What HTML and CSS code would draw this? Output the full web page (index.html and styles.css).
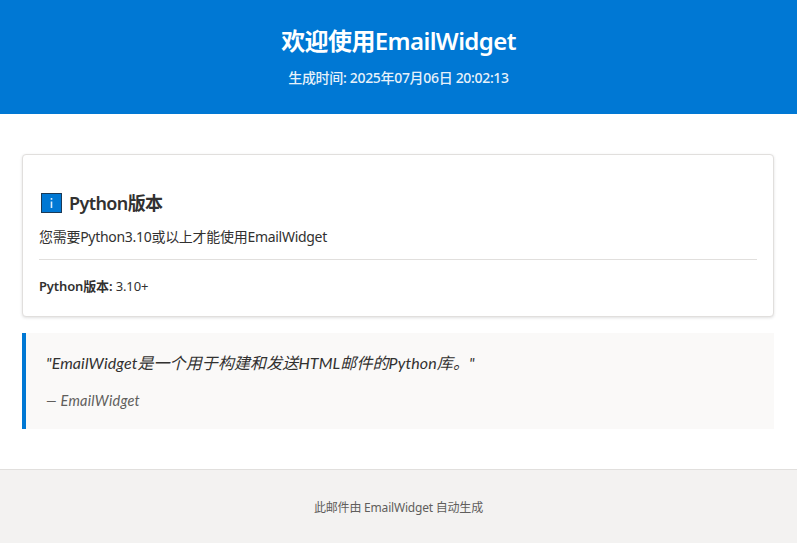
FILE: index.html
```html
<!DOCTYPE html>
<html lang="zh-CN">
<head>
<meta charset="utf-8">
<title>EmailWidget</title>
<link rel="stylesheet" href="styles.css">
</head>
<body>
<header class="header">
  <h1 class="title">欢迎使用EmailWidget</h1>
  <p class="timestamp">生成时间: 2025年07月06日 20:02:13</p>
</header>
<main class="content">
  <section class="card">
    <h3 class="card-title"><svg class="info-icon" viewBox="0 0 21 20" aria-hidden="true"><rect x="0.5" y="0.5" width="20" height="19" fill="#0078d4" stroke="#1b3a57"/><rect x="9.7" y="8.5" width="1.6" height="6.5" fill="#d9ecfb"/><rect x="9.7" y="5" width="1.6" height="1.8" fill="#d9ecfb"/></svg><span>Python版本</span></h3>
    <p class="card-desc">您需要Python3.10或以上才能使用EmailWidget</p>
    <div class="meta"><strong>Python版本:</strong> 3.10+</div>
  </section>
  <blockquote class="quote">
    <p class="quote-text">"EmailWidget是一个用于构建和发送HTML邮件的Python库。"</p>
    <cite class="quote-author">— EmailWidget</cite>
  </blockquote>
</main>
<footer class="footer">此邮件由 EmailWidget 自动生成</footer>
</body>
</html>
```
FILE: styles.css
```css
* { box-sizing: border-box; }
html, body { margin: 0; padding: 0; }
body {
  background: #fff;
  color: #323130;
  font-family: "Noto Sans", "Noto Sans CJK SC", sans-serif;
  font-size: 14px;
  height: 543px;
  overflow: hidden;
}
.header {
  background: #0078d4;
  color: #fff;
  height: 114px;
  padding-top: 24px;
  text-align: center;
}
.title { margin: 0; font-size: 24px; line-height: 34px; font-weight: 600; letter-spacing: -0.6px; }
.timestamp { margin: 10px 0 0; font-size: 14px; line-height: 20px; font-weight: 500; opacity: .9; letter-spacing: -0.32px; }
.content { padding: 40px 23px 40px 22px; }
.card {
  background: #fff;
  border: 1px solid #e1dfdd;
  border-radius: 4px;
  box-shadow: 0 1px 3px rgba(0,0,0,.12);
  height: 163px;
  padding: 35px 16px 0;
}
.card-title {
  display: flex;
  align-items: center;
  gap: 7px;
  margin: 0;
  font-size: 18px;
  line-height: 26px;
  font-weight: 600;
  letter-spacing: -0.6px;
  padding-left: 2px;
}
.info-icon { width: 21px; height: 20px; flex: none; }
.card-desc { margin: 11px 0 0; font-size: 14px; line-height: 20px; letter-spacing: -0.29px; color: #323130; }
.meta {
  border-top: 1px solid #e1dfdd;
  margin-top: 12px;
  padding-top: 16px;
  font-size: 13px;
  line-height: 20px;
  letter-spacing: -0.13px;
}
.meta strong { font-weight: 600; }
.quote {
  margin: 16px 0 0;
  background: #faf9f8;
  border-left: 4px solid #0078d4;
  height: 96px;
  padding: 18px 20px 0;
}
.quote-text { margin: 0; font-family: "Lato", "Noto Sans CJK SC", sans-serif; font-size: 16px; line-height: 24px; letter-spacing: 0.1px; font-style: italic; }
.quote-author { display: block; margin-top: 16px; font-family: "Lato", "Noto Sans CJK SC", sans-serif; font-size: 14.5px; line-height: 20px; letter-spacing: 0.25px; font-style: italic; color: #605e5c; }
.footer {
  background: #f3f2f1;
  border-top: 1px solid #e1dfdd;
  height: 74px;
  padding-top: 28px;
  text-align: center;
  font-size: 12px;
  line-height: 20px;
  letter-spacing: -0.2px;
  color: #605e5c;
}
```
